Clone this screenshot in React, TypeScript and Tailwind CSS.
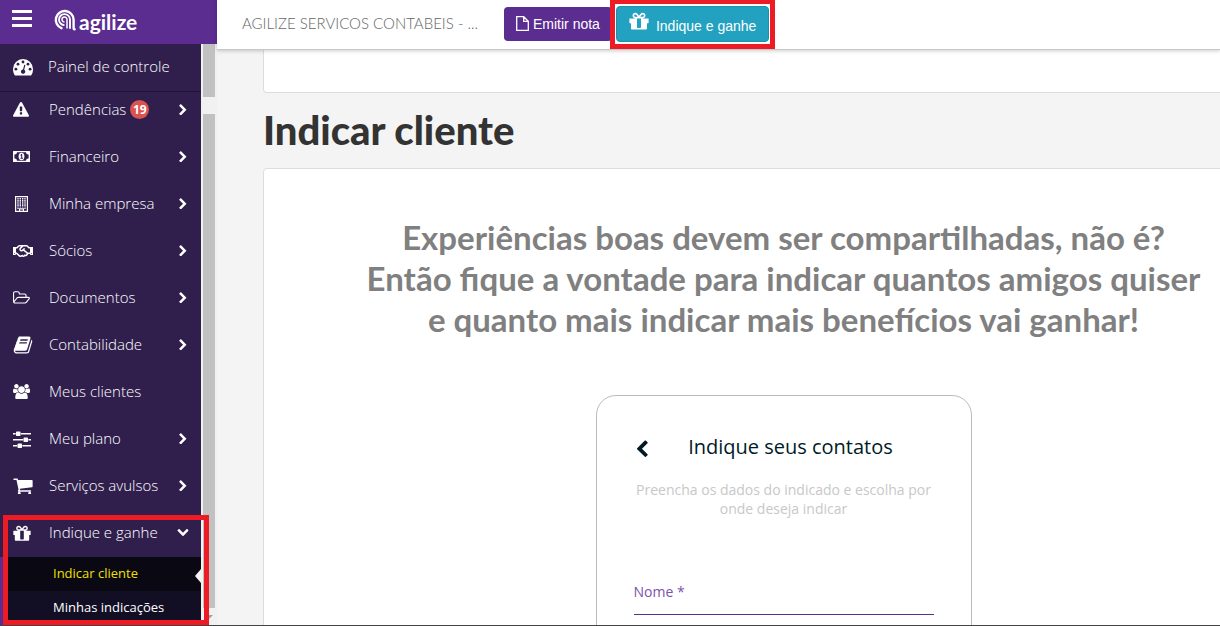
import { FaRegHandshake } from "react-icons/fa";

type Glyph = { viewBox: string; d: string };

const glyphs: Record<string, Glyph> = {
  warning: {
    viewBox: "0 0 1792 1792",
    d: "M1024 1375v-190q0-14-9.5-23.5t-22.5-9.5h-192q-13 0-22.5 9.5t-9.5 23.5v190q0 14 9.5 23.5t22.5 9.5h192q13 0 22.5-9.5t9.5-23.5zm-2-374l18-459q0-12-10-19-13-11-24-11h-220q-11 0-24 11-10 7-10 21l17 457q0 10 10 16.5t24 6.5h185q14 0 23.5-6.5t10.5-16.5zm-14-934l768 1408q35 63-2 126-17 29-46.5 46t-63.5 17h-1536q-34 0-63.5-17t-46.5-46q-37-63-2-126l768-1408q17-31 47-49t65-18 65 18 47 49z",
  },
  folder: {
    viewBox: "64 0 1920 1792",
    d: "M1845 931q0-35-53-35h-1088q-40 0-85.5 21.5t-71.5 52.5l-294 363q-18 24-18 40 0 35 53 35h1088q40 0 86-22t71-53l294-363q18-22 18-39zm-1141-163h768v-160q0-40-28-68t-68-28h-576q-40 0-68-28t-28-68v-64q0-40-28-68t-68-28h-320q-40 0-68 28t-28 68v853l256-315q44-53 116-87.5t140-34.5zm1269 163q0 62-46 120l-295 363q-43 53-116 87.5t-140 34.5h-1088q-92 0-158-66t-66-158v-960q0-92 66-158t158-66h320q92 0 158 66t66 158v32h544q92 0 158 66t66 158v160h192q54 0 99 24.5t67 70.5q15 32 15 68z",
  },
  book: {
    viewBox: "0 0 1792 1792",
    d: "M1703 478q40 57 18 129l-275 906q-19 64-76.5 107.5t-122.5 43.5h-923q-77 0-148.5-53.5t-99.5-131.5q-24-67-2-127 0-4 3-27t4-37q1-8-3-21.5t-3-19.5q2-11 8-21t16.5-23.5 16.5-23.5q23-38 45-91.5t30-91.5q3-10 .5-30t-.5-28q3-11 17-28t17-23q21-36 42-92t25-90q1-9-2.5-32t.5-28q4-13 22-30.5t22-22.5q19-26 42.5-84.5t27.5-96.5q1-8-3-25.5t-2-26.5q2-8 9-18t18-23 17-21q8-12 16.5-30.5t15-35 16-36 19.5-32 26.5-23.5 36-11.5 47.5 5.5l-1 3q38-9 51-9h761q74 0 114 56t18 130l-274 906q-36 119-71.5 153.5t-128.5 34.5h-869q-27 0-38 15-11 16-1 43 24 70 144 70h923q29 0 56-15.5t35-41.5l300-987q7-22 5-57 38 15 59 43zm-1064 2q-4 13 2 22.5t20 9.5h608q13 0 25.5-9.5t16.5-22.5l21-64q4-13-2-22.5t-20-9.5h-608q-13 0-25.5 9.5t-16.5 22.5zm-83 256q-4 13 2 22.5t20 9.5h608q13 0 25.5-9.5t16.5-22.5l21-64q4-13-2-22.5t-20-9.5h-608q-13 0-25.5 9.5t-16.5 22.5z",
  },
  users: {
    viewBox: "0 0 1920 1792",
    d: "M593 896q-162 5-265 128h-134q-82 0-138-40.5t-56-118.5q0-353 124-353 6 0 43.5 21t97.5 42.5 119 21.5q67 0 133-23-5 37-5 66 0 159 93 290zm1071 637q0 120-73 189.5t-194 69.5h-874q-121 0-194-69.5t-73-189.5q0-53 3.5-103.5t14-109 26.5-108.5 43-97.5 62-81 85.5-53.5 111.5-20q10 0 43 21.5t73 48 107 48 135 21.5 135-21.5 107-48 73-48 43-21.5q61 0 111.5 20t85.5 53.5 62 81 43 97.5 26.5 108.5 14 109 3.5 103.5zm-1024-1277q0 106-75 181t-181 75-181-75-75-181 75-181 181-75 181 75 75 181zm704 384q0 159-112.5 271.5t-271.5 112.5-271.5-112.5-112.5-271.5 112.5-271.5 271.5-112.5 271.5 112.5 112.5 271.5zm576 225q0 78-56 118.5t-138 40.5h-134q-103-123-265-128 93-131 93-290 0-29-5-66 66 23 133 23 59 0 119-21.5t97.5-42.5 43.5-21q124 0 124 353zm-128-609q0 106-75 181t-181 75-181-75-75-181 75-181 181-75 181 75 75 181z",
  },
  sliders: {
    viewBox: "0 128 1536 1536",
    d: "M352 1408v128h-352v-128h352zm352-128q26 0 45 19t19 45v256q0 26-19 45t-45 19h-256q-26 0-45-19t-19-45v-256q0-26 19-45t45-19h256zm160-384v128h-864v-128h864zm-640-512v128h-224v-128h224zm1312 1024v128h-736v-128h736zm-960-1152q26 0 45 19t19 45v256q0 26-19 45t-45 19h-256q-26 0-45-19t-19-45v-256q0-26 19-45t45-19h256zm640 512q26 0 45 19t19 45v256q0 26-19 45t-45 19h-256q-26 0-45-19t-19-45v-256q0-26 19-45t45-19h256zm320 128v128h-224v-128h224zm0-512v128h-864v-128h864z",
  },
  cart: {
    viewBox: "32 128 1728 1536",
    d: "M704 1536q0 52-38 90t-90 38-90-38-38-90 38-90 90-38 90 38 38 90zm896 0q0 52-38 90t-90 38-90-38-38-90 38-90 90-38 90 38 38 90zm128-1088v512q0 24-16.5 42.5t-40.5 21.5l-1044 122q13 60 13 70 0 16-24 64h920q26 0 45 19t19 45-19 45-45 19h-1024q-26 0-45-19t-19-45q0-11 8-31.5t16-36 21.5-40 15.5-29.5l-177-823h-204q-26 0-45-19t-19-45 19-45 45-19h256q16 0 28.5 6.5t19.5 15.5 13 24.5 8 26 5.5 29.5 4.5 26h1201q26 0 45 19t19 45z",
  },
  gift: {
    viewBox: "96 128 1600 1472",
    d: "M1056 1356v-716h-320v716q0 25 18 38.5t46 13.5h192q28 0 46-13.5t18-38.5zm-456-844h195l-126-161q-26-31-69-31-40 0-68 28t-28 68 28 68 68 28zm688-96q0-40-28-68t-68-28q-43 0-69 31l-125 161h194q40 0 68-28t28-68zm376 256v320q0 14-9 23t-23 9h-96v416q0 40-28 68t-68 28h-1088q-40 0-68-28t-28-68v-416h-96q-14 0-23-9t-9-23v-320q0-14 9-23t23-9h440q-93 0-158.5-65.5t-65.5-158.5 65.5-158.5 158.5-65.5q107 0 168 77l128 165 128-165q61-77 168-77 93 0 158.5 65.5t65.5 158.5-65.5 158.5-158.5 65.5h440q14 0 23 9t9 23z",
  },
  chevron: {
    viewBox: "320 0 1152 1664",
    d: "M1363 877l-742 742q-19 19-45 19t-45-19l-166-166q-19-19-19-45t19-45l531-531-531-531q-19-19-19-45t19-45l166-166q19-19 45-19t45 19l742 742q19 19 19 45t-19 45z",
  },
};

function Icon({ name, className }: { name: string; className: string }) {
  return (
    <svg viewBox={glyphs[name].viewBox} fill="currentColor" className={className} aria-hidden="true">
      <path d={glyphs[name].d} />
    </svg>
  );
}

function GaugeIcon() {
  return (
    <svg viewBox="0 0 20 17" className="w-5" aria-hidden="true">
      <path d="M10 0a10 10 0 0 0-10 10c0 2.300.6 4.300 1.600 6 .2.400.5.600 1 .6h14.800c.5 0 .8-.2 1-.6a10.500 10.500 0 0 0 1.600-6A10 10 0 0 0 10 0z" fill="#fff" />
      <g fill="#301f4d">
        <circle cx="2.900" cy="10.200" r="1.400" />
        <circle cx="5" cy="5.200" r="1.400" />
        <circle cx="10" cy="3" r="1.400" />
        <circle cx="15" cy="5.200" r="1.400" />
        <circle cx="17.100" cy="10.200" r="1.400" />
        <path d="M11.300 5.800l1.100.3-1.200 4.600a2.200 2.200 0 1 1-1.200-.3z" />
      </g>
    </svg>
  );
}

function MoneyIcon() {
  return (
    <svg viewBox="0 0 17 11" className="w-[17px]" aria-hidden="true">
      <rect width="17" height="11" rx=".5" fill="#fff" />
      <path d="M4 1.200h9a2.400 2.400 0 0 0 2.600 2.300v4A2.400 2.400 0 0 0 13 9.800H4a2.400 2.400 0 0 0-2.600-2.300v-4A2.400 2.400 0 0 0 4 1.200z" fill="#301f4d" />
      <ellipse cx="8.500" cy="5.500" rx="2.900" ry="3.700" fill="#fff" />
      <path d="M7.300 4l1.100-.9h.8v3.700h.8v.9H7.400v-.9h.8V4.400l-.5.300z" fill="#301f4d" />
    </svg>
  );
}

function BuildingIcon() {
  return (
    <svg viewBox="0 0 13 16" className="ml-[2px] w-[13px]" aria-hidden="true">
      <path d="M.6.600h11.800v14.800H.6z" fill="none" stroke="#fff" strokeWidth="1.200" />
      <path d="M3 2v9.500M5.300 2v9.500M7.700 2v9.500M10 2v9.500" stroke="#fff" strokeWidth="1.300" strokeDasharray="1.600 .5" />
      <path d="M2.400 12.500h1.300M9.300 12.500h1.300M4.600 15.500v-2.700h3.800v2.700" stroke="#fff" fill="none" strokeWidth="1.200" />
    </svg>
  );
}

function Logo() {
  return (
    <a href="#inicio" className="flex items-center gap-[3px] pb-1 text-white">
      <svg viewBox="0 0 22 22" className="w-[22px]" fill="none" stroke="currentColor" aria-hidden="true">
        <path d="M7.500 19.200A8.900 8.900 0 1 1 19.600 10.500v8.800q0 1 1 1" strokeWidth="2.400" strokeLinecap="round" />
        <path d="M16 19.800v-9.300a5.500 5.500 0 1 0-5.500 5.600" strokeWidth="1.900" />
        <path d="M13 19.500v-9a2.500 2.500 0 1 0-2.500 2.500" strokeWidth="1.500" />
      </svg>
      <span className="pt-1 text-[21px] leading-6 font-bold">agilize</span>
    </a>
  );
}

const items = [
  { label: "Pendências", icon: <Icon name="warning" className="w-4" />, badge: 19, arrow: true },
  { label: "Financeiro", icon: <MoneyIcon />, arrow: true },
  { label: "Minha empresa", icon: <BuildingIcon />, arrow: true },
  { label: "Sócios", icon: <FaRegHandshake className="size-5" />, arrow: true },
  { label: "Documentos", icon: <Icon name="folder" className="w-[17px]" />, arrow: true },
  { label: "Contabilidade", icon: <Icon name="book" className="w-5" />, arrow: true },
  { label: "Meus clientes", icon: <Icon name="users" className="w-[17px]" /> },
  { label: "Meu plano", icon: <Icon name="sliders" className="w-[18px]" />, arrow: true },
  { label: "Serviços avulsos", icon: <Icon name="cart" className="w-5" />, arrow: true },
];

function Sidebar() {
  return (
    <aside className="flex w-[217px] shrink-0 flex-col">
      <div className="flex h-11 shrink-0 items-center gap-[22px] bg-[#5c2d91] px-3">
        <button aria-label="Menu" className="flex w-5 flex-col gap-1 pb-2">
          <span className="h-[3px] bg-white" />
          <span className="h-[3px] bg-white" />
          <span className="h-[3px] bg-white" />
        </button>
        <Logo />
      </div>
      <div className="flex min-h-0 grow">
        <nav className="w-[201px] shrink-0 overflow-hidden bg-[#301f4d] font-['Open_Sans',sans-serif] text-[15px] font-light text-white">
          <a href="#painel" className="flex h-12 items-center border-b border-[#1f1433] pl-[13px]">
            <span className="flex w-[35px] items-center">
              <GaugeIcon />
            </span>
            <span className="pb-[2px]">Painel de controle</span>
          </a>
          <ul className="-mt-[6px]">
            {items.map((item) => (
              <li key={item.label}>
                <a href="#menu" className="flex h-[47px] items-center pr-[14px] pl-[13px]">
                  <span className="flex w-9 items-center">{item.icon}</span>
                  <span className="pb-px">{item.label}</span>
                  {item.badge && (
                    <span className="ml-1 flex size-[19px] items-center justify-center rounded-full bg-[#d9534f] text-xs font-bold">
                      {item.badge}
                    </span>
                  )}
                  {item.arrow && <Icon name="chevron" className="ml-auto w-2" />}
                </a>
              </li>
            ))}
            <li>
              <a href="#indique" className="flex h-12 items-center pr-[14px] pl-[13px]">
                <span className="flex w-9 items-center">
                  <Icon name="gift" className="w-[18px]" />
                </span>
                <span className="pb-px">Indique e ganhe</span>
                <Icon name="chevron" className="ml-auto w-2 rotate-90" />
              </a>
              <ul className="border-l-4 border-[#5c2d91] bg-[#120e24] text-[13px] font-normal">
                <li className="relative bg-[#0a0813]">
                  <a href="#indicar" className="flex h-[34px] items-center pl-[49px] text-[#f0e000]">
                    Indicar cliente
                  </a>
                  <span className="absolute top-3 right-0 border-y-[7px] border-r-[6px] border-y-transparent border-r-[#f4f4f4]" />
                </li>
                <li>
                  <a href="#indicacoes" className="flex h-[34px] items-center pl-[49px]">
                    Minhas indicações
                  </a>
                </li>
              </ul>
            </li>
          </ul>
        </nav>
        <div className="flex grow flex-col bg-[#f1f1f1] px-[2px]">
          <div className="h-[53px] bg-[#c1c1c1]" />
          <div className="mt-[17px] grow bg-[#c1c1c1]" />
          <div className="flex h-[17px] items-center justify-center">
            <span className="border-x-4 border-t-4 border-x-transparent border-t-[#a0a0a0]" />
          </div>
        </div>
      </div>
    </aside>
  );
}

function Topbar() {
  return (
    <header className="relative z-10 flex h-[50px] shrink-0 items-center border-b border-[#c8c8c8] bg-white pb-[2px] pl-[25px] shadow-[0_1px_4px_rgba(0,0,0,0.2)]">
      <span className="w-[262px] truncate text-[15px] font-light text-[#666]">AGILIZE SERVICOS CONTABEIS - ...</span>
      <button className="flex h-[34px] items-center gap-1 rounded bg-[#5c2d91] px-3 font-['Liberation_Sans',Arial,sans-serif] text-sm text-white">
        <svg viewBox="0 0 13 15" className="w-[13px]" fill="none" stroke="currentColor" strokeWidth="1.300" aria-hidden="true">
          <path d="M.7.7h7l4.600 4.600v9H.7zM7.700.7v4.600h4.600" />
        </svg>
        Emitir nota
      </button>
      <div className="relative ml-1">
        <button className="flex h-9 items-center gap-[7px] rounded border border-[#1f90ab] bg-[#23a1c0] px-3 font-['Liberation_Sans',Arial,sans-serif] text-sm text-white">
          <Icon name="gift" className="mb-1 w-5" />
          <span className="pt-1">Indique e ganhe</span>
        </button>
        <span className="pointer-events-none absolute -inset-x-[6px] -top-[7px] -bottom-[7px] border-[5px] border-[#ed1c24]" />
      </div>
    </header>
  );
}

export default function App() {
  return (
    <div className="relative flex h-screen overflow-hidden border-b border-[#444] bg-[#f4f4f4] font-[Lato,sans-serif] text-base">
      <Sidebar />
      <div className="flex min-w-0 grow flex-col">
        <Topbar />
        <main className="-mr-[84px] min-h-0 grow overflow-hidden pl-[46px]">
          <section className="h-[43px] rounded-b-sm border border-t-0 border-[#ddd] bg-white" />
          <h1 className="py-[18px] text-[40px] leading-[39px] font-black text-[#333]">Indicar cliente</h1>
          <section className="flex flex-col items-center rounded-sm border border-[#ddd] bg-white pt-12">
            <h2 className="text-center text-[33px] leading-[41px] font-bold text-[#808080]">
              Experiências boas devem ser compartilhadas, não é?
              <br />
              Então fique a vontade para indicar quantos amigos quiser
              <br />e quanto mais indicar mais benefícios vai ganhar!
            </h2>
            <form className="mt-[55px] h-[420px] w-[376px] rounded-[20px] border border-[#bbb] px-[37px] pt-[35px] font-['Open_Sans',sans-serif]">
              <div className="flex items-center">
                <button type="button" aria-label="Voltar" className="pt-1 pl-[2px] text-[#001b26]">
                  <Icon name="chevron" className="w-3 rotate-180" />
                </button>
                <h3 className="grow text-center text-xl leading-8 text-[#001b26]">Indique seus contatos</h3>
              </div>
              <p className="mt-[17px] text-center text-sm leading-[19px] text-[#c8c8c8]">
                Preencha os dados do indicado e escolha por onde deseja indicar
              </p>
              <label htmlFor="nome" className="mt-16 block text-sm text-[#7b52ab]">
                Nome *
              </label>
              <input id="nome" className="block h-[13px] w-full border-b border-[#5c2d91] outline-none" />
            </form>
          </section>
        </main>
      </div>
      <div className="pointer-events-none absolute top-[515px] left-[3px] h-[110px] w-[206px] border-[5px] border-[#ed1c24]" />
    </div>
  );
}
